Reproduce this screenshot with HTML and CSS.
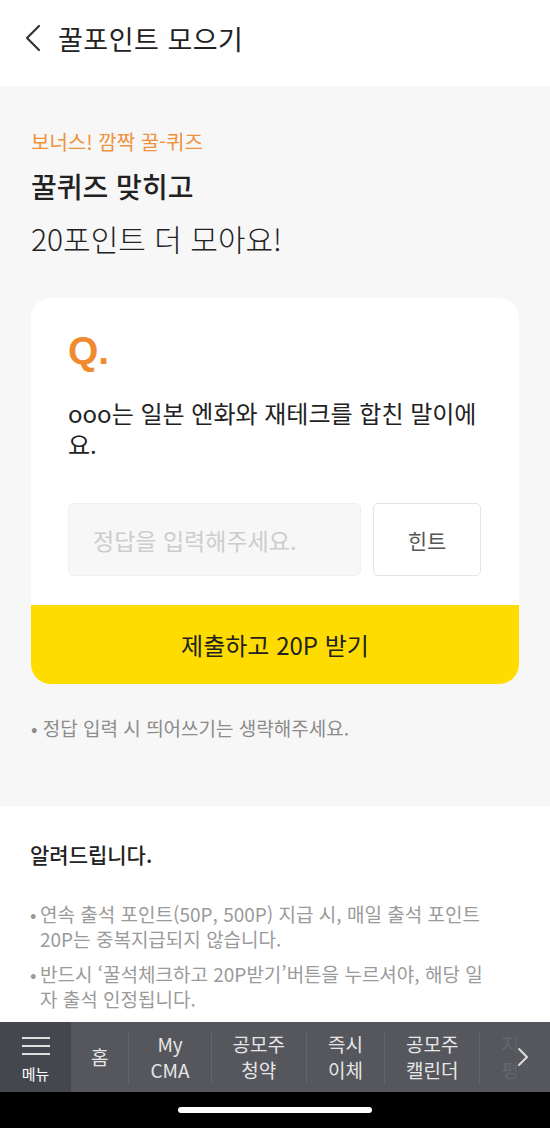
FILE: index.html
```html
<!DOCTYPE html>
<html lang="ko">
<head>
<meta charset="utf-8">
<title>꿀포인트 모으기</title>
<link rel="stylesheet" href="styles.css">
</head>
<body>
<div class="screen">
  <header class="topbar">
    <svg class="back" width="18" height="28" viewBox="0 0 18 28"><path d="M15 2 L3 14 L15 26" fill="none" stroke="#333" stroke-width="2.2" stroke-linecap="round" stroke-linejoin="round"/></svg>
    <h1 class="title">꿀포인트 모으기</h1>
  </header>

  <main class="quiz">
    <p class="eyebrow">보너스! 깜짝 꿀-퀴즈</p>
    <h2 class="headline">꿀퀴즈 맞히고</h2>
    <p class="subline">20포인트 더 모아요!</p>

    <section class="card">
      <div class="card-body">
        <div class="q">Q.</div>
        <p class="question">ooo는 일본 엔화와 재테크를 합친 말이에요.</p>
        <div class="answer-row">
          <div class="answer-input">정답을 입력해주세요.</div>
          <button class="hint">힌트</button>
        </div>
      </div>
      <button class="submit">제출하고 20P 받기</button>
    </section>

    <p class="note">• 정답 입력 시 띄어쓰기는 생략해주세요.</p>
  </main>

  <section class="notice">
    <h3 class="notice-title">알려드립니다.</h3>
    <ul class="notice-list">
      <li>연속 출석 포인트(50P, 500P) 지급 시, 매일 출석 포인트 <span class="nb">20P는</span> 중복지급되지 않습니다.</li>
      <li>반드시 ‘꿀석체크하고 20P받기’버튼을 누르셔야, 해당 일자 출석 인정됩니다.</li>
    </ul>
  </section>

  <nav class="tabbar">
    <div class="menu">
      <span class="burger"><i></i><i></i><i></i></span>
      <span class="menu-label">메뉴</span>
    </div>
    <div class="tabs">
      <span class="tab">홈</span>
      <span class="tab">My<br>CMA</span>
      <span class="tab">공모주<br>청약</span>
      <span class="tab">즉시<br>이체</span>
      <span class="tab">공모주<br>캘린더</span>
      <span class="tab">지급<br>평가</span>
      <div class="fade">
        <svg width="14" height="22" viewBox="0 0 14 22"><path d="M3 3 L11 11 L3 19" fill="none" stroke="#dcdcdc" stroke-width="2" stroke-linecap="round" stroke-linejoin="round"/></svg>
      </div>
    </div>
  </nav>
  <div class="homebar"><span class="pill"></span></div>
</div>
</body>
</html>
```

FILE: styles.css
```css
* { box-sizing: border-box; margin: 0; padding: 0; }
html, body { background: #f7f7f7; }
body {
  font-family: "Noto Sans CJK KR", "Noto Sans", sans-serif;
  color: #222;
  width: 550px;
  height: 1128px;
  overflow: hidden;
}
.screen { display: flex; flex-direction: column; height: 1128px; }

.topbar {
  height: 86px;
  background: #fff;
  display: flex;
  align-items: center;
  padding: 0 0 10px 24px;
  gap: 16px;
}
.back { flex: none; }
.title { font-size: 27px; font-weight: 400; color: #222; letter-spacing: 0.5px; }

.quiz { padding: 43px 31px 0; height: 720px; }
.eyebrow { font-size: 20px; line-height: 26px; color: #f0913c; }
.headline { margin-top: 14px; font-size: 28px; line-height: 34px; font-weight: 500; color: #222; }
.subline { margin-top: 17px; font-size: 30px; line-height: 36px; font-weight: 300; color: #222; }

.card {
  margin-top: 42px;
  background: #fff;
  border-radius: 20px;
  overflow: hidden;
}
.card-body { padding: 31px 37px 29px; }
.q { font-family: "Liberation Sans", Arial, sans-serif; font-size: 39px; line-height: 44px; font-weight: 700; color: #f08a2f; }
.question { margin-top: 24px; font-size: 24px; line-height: 31px; color: #222; }
.answer-row { margin-top: 44px; display: flex; gap: 12px; }
.answer-input {
  flex: none;
  width: 293px;
  height: 73px;
  background: #f7f7f7;
  border: 1px solid #f0f0f0;
  border-radius: 5px;
  padding-left: 24px;
  display: flex;
  align-items: center;
  font-size: 23px;
  color: #cdcdcd;
}
.hint {
  flex: none;
  width: 108px;
  height: 73px;
  background: #fff;
  border: 1.5px solid #e4e4e4;
  border-radius: 5px;
  font-family: inherit;
  font-size: 21px;
  color: #555;
}
.submit {
  display: block;
  width: 100%;
  height: 79px;
  border: 0;
  background: #ffdc00;
  font-family: inherit;
  font-size: 24px;
  font-weight: 400;
  color: #222;
}
.note { margin-top: 32px; font-size: 19px; line-height: 24px; color: #8c8c8c; }

.notice { background: #fff; padding: 34px 30px 0; height: 216px; overflow: hidden; }
.notice-title { font-size: 21px; line-height: 28px; font-weight: 500; color: #222; }
.notice-list { list-style: none; margin-top: 33px; padding-right: 20px; }
.notice-list li {
  position: relative;
  padding-left: 10px;
  font-size: 19px;
  line-height: 25px;
  color: #9a9a9a;
  margin-bottom: 10px;
  word-break: break-all;
}
.notice-list li::before { content: "•"; position: absolute; left: 0; top: 0; }
.nb { white-space: nowrap; }

.tabbar { height: 70px; display: flex; background: #55575d; }
.menu {
  flex: none;
  width: 71px;
  background: #45474e;
  display: flex;
  flex-direction: column;
  align-items: center;
  padding-top: 15px;
}
.burger { display: flex; flex-direction: column; gap: 6.5px; width: 28px; }
.burger i { display: block; height: 1.6px; background: #e0e0e0; }
.menu-label { margin-top: 9px; font-size: 15px; line-height: 20px; color: #fff; }
.tabs { position: relative; flex: 1; display: flex; align-items: center; overflow: hidden; }
.tab {
  flex: none;
  padding: 0 21px;
  font-size: 19px;
  line-height: 26px;
  color: #e6e6e6;
  text-align: center;
  border-left: 1px solid #64666c;
}
.tab:first-child { border-left: 0; padding: 0 20px; }
.fade {
  position: absolute;
  right: 0; top: 0; bottom: 0;
  width: 64px;
  display: flex;
  align-items: center;
  justify-content: flex-end;
  padding-right: 20px;
  background: linear-gradient(to right, rgba(85,87,93,0.75) 0%, rgba(85,87,93,0.92) 40%, #55575d 70%);
}
.homebar { flex: 1; background: #000; display: flex; justify-content: center; padding-top: 15px; }
.pill { width: 194px; height: 6px; border-radius: 3px; background: #fff; }
```
